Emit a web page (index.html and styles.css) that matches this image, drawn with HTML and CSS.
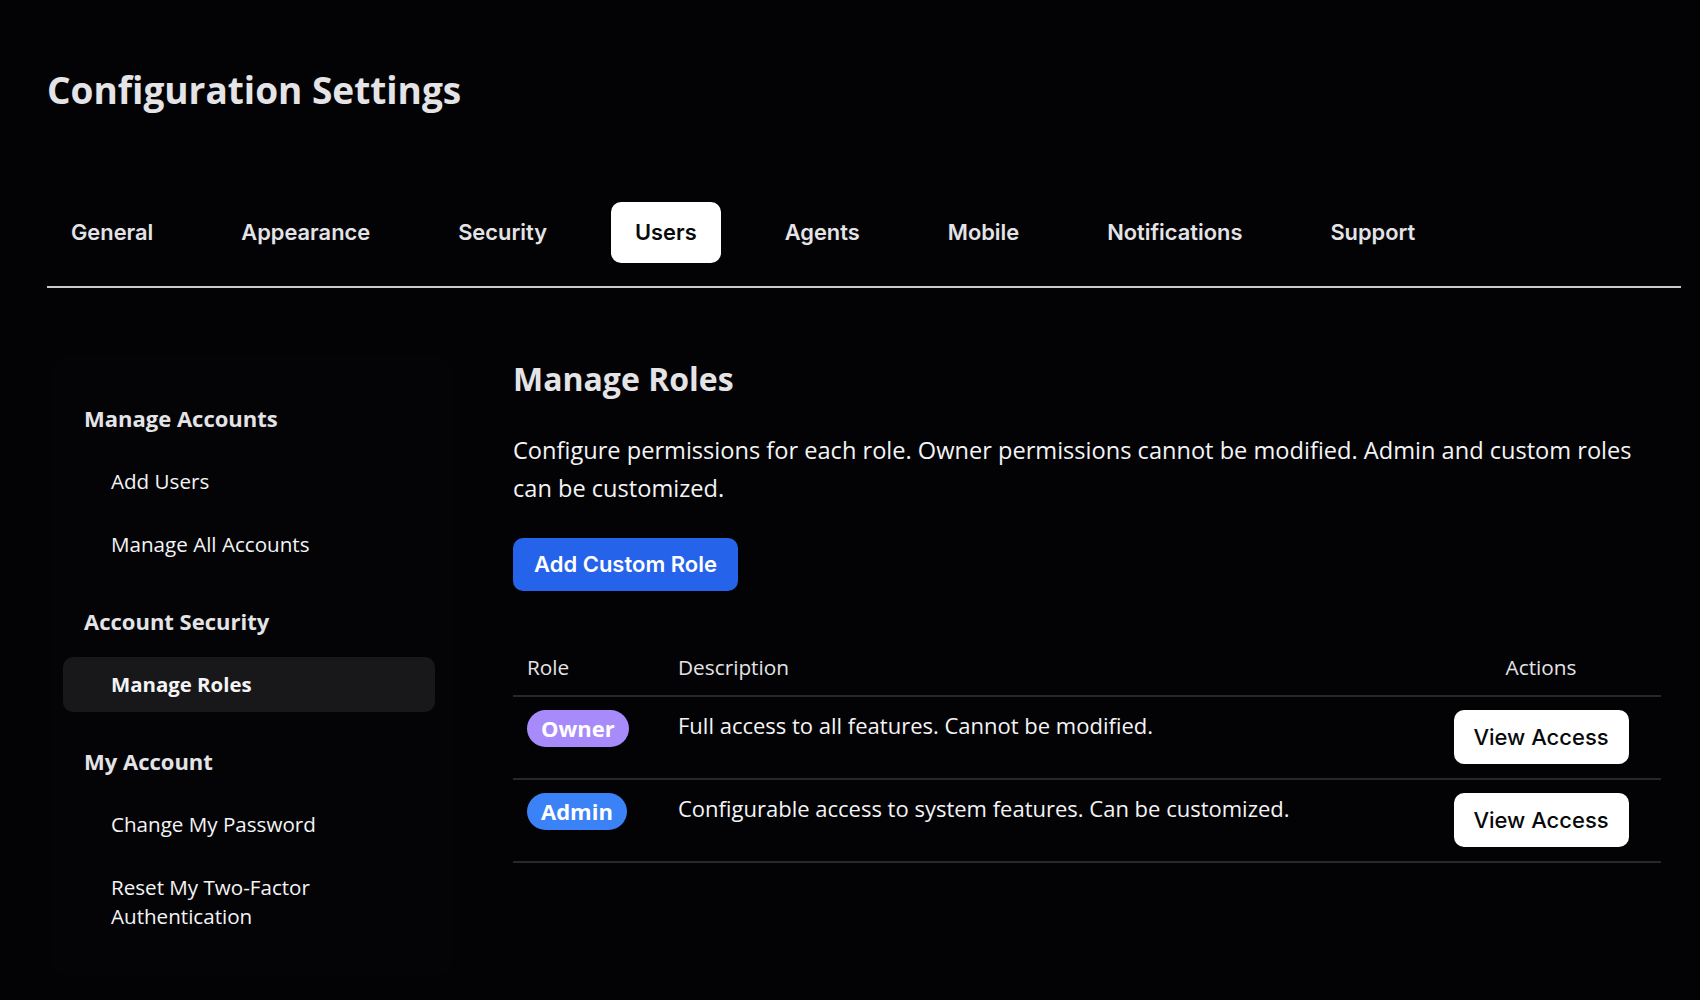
FILE: index.html
```html
<!DOCTYPE html>
<html lang="en">
	<head>
		<meta charset="UTF-8" />
		<meta name="viewport" content="width=device-width, initial-scale=1.0" />
		<title>Configuration Settings</title>
		<link rel="stylesheet" href="styles.css">
	</head>
	<body>
		<div class="page">
			<h1 class="page-title">Configuration Settings</h1>

			<nav class="tabs">
				<div class="tab">General</div>
				<div class="tab">Appearance</div>
				<div class="tab">Security</div>
				<div class="tab active">Users</div>
				<div class="tab">Agents</div>
				<div class="tab">Mobile</div>
				<div class="tab">Notifications</div>
				<div class="tab">Support</div>
			</nav>

			<div class="layout">
				<aside class="sidebar">
					<div class="nav-group">
						<div class="nav-heading">Manage Accounts</div>
						<ul class="nav-list">
							<li class="nav-item">Add Users</li>
							<li class="nav-item">Manage All Accounts</li>
						</ul>
					</div>
					<div class="nav-group">
						<div class="nav-heading">Account Security</div>
						<ul class="nav-list">
							<li class="nav-item active">Manage Roles</li>
						</ul>
					</div>
					<div class="nav-group">
						<div class="nav-heading">My Account</div>
						<ul class="nav-list">
							<li class="nav-item">Change My Password</li>
							<li class="nav-item">Reset My Two-Factor Authentication</li>
						</ul>
					</div>
				</aside>

				<main class="content">
					<h2 class="section-title">Manage Roles</h2>
					<p class="section-text">Configure permissions for each role. Owner permissions cannot be modified. Admin and custom roles can be customized.</p>
					<button class="btn-primary" type="button">Add Custom Role</button>

					<table class="roles">
						<colgroup>
							<col class="col-role" />
							<col />
							<col class="col-actions" />
						</colgroup>
						<thead>
							<tr>
								<th>Role</th>
								<th>Description</th>
								<th class="center">Actions</th>
							</tr>
						</thead>
						<tbody>
							<tr>
								<td><span class="badge badge-owner">Owner</span></td>
								<td>Full access to all features. Cannot be modified.</td>
								<td class="center"><button class="btn-light" type="button">View Access</button></td>
							</tr>
							<tr>
								<td><span class="badge badge-admin">Admin</span></td>
								<td>Configurable access to system features. Can be customized.</td>
								<td class="center"><button class="btn-light" type="button">View Access</button></td>
							</tr>
						</tbody>
					</table>
				</main>
			</div>
		</div>
	</body>
</html>
```

FILE: styles.css
```css
body {
	margin: 0;
	background: #030306;
	color: #f4f4f5;
	font-family: 'Open Sans', sans-serif;
}

.page {
	padding: 68px 19px 0 47px;
}

.page-title {
	margin: 0;
	font-size: 37px;
	font-weight: 700;
	line-height: 43px;
	color: #e4e4e7;
}

/* top tabs */
.tabs {
	display: flex;
	gap: 40px;
	margin-top: 91px;
	padding-bottom: 23px;
	border-bottom: 2px solid #c9c9cc;
}
.tab {
	padding: 18px 24px;
	border-radius: 10px;
	font-family: Inter, 'Liberation Sans', sans-serif;
	font-size: 21.85px;
	font-weight: 600;
	line-height: 25px;
	color: #e4e4e7;
}
.tab.active {
	background: #fff;
	color: #09090b;
}

.layout {
	display: flex;
	gap: 61px;
	margin-top: 69px;
	padding-right: 20px;
}

/* side menu */
.sidebar {
	flex: 0 0 402px;
	box-sizing: border-box;
	margin-left: 3px;
	padding: 47px 17px 32px 13px;
	background: #040407;
	border-radius: 16px;
}
.nav-group + .nav-group {
	margin-top: 35px;
}
.nav-heading {
	padding-left: 21px;
	margin-bottom: 21px;
	font-size: 22px;
	font-weight: 700;
	line-height: 29px;
	color: #e4e4e7;
}
.nav-list {
	list-style: none;
	margin: 0;
	padding: 0;
	display: flex;
	flex-direction: column;
	gap: 8px;
}
.nav-item {
	padding: 13px 48px;
	border-radius: 10px;
	font-size: 20.6px;
	line-height: 29px;
	color: #f4f4f5;
}
.nav-item.active {
	background: #18181b;
	font-size: 20.4px;
	font-weight: 700;
}

/* main panel */
.content {
	flex: 1;
	min-width: 0;
}
.section-title {
	margin: 0;
	font-size: 32px;
	font-weight: 700;
	line-height: 44px;
	color: #e4e4e7;
}
.section-text {
	margin: 30px 0 0;
	font-size: 23.6px;
	line-height: 38px;
	color: #f4f4f5;
}

.btn-primary {
	display: block;
	margin-top: 31px;
	padding: 14px 21px;
	border: none;
	border-radius: 10px;
	background: #2563eb;
	color: #fff;
	font-family: Inter, 'Liberation Sans', sans-serif;
	font-size: 22px;
	font-weight: 600;
	line-height: 25px;
}

.roles {
	width: 100%;
	margin-top: 48px;
	border-collapse: collapse;
	table-layout: fixed;
	font-size: 20.8px;
	line-height: 30px;
}
.col-role {
	width: 151px;
}
.col-actions {
	width: 240px;
}
.roles th {
	padding: 13px 14px;
	text-align: left;
	font-weight: 400;
	color: #e4e4e7;
	border-bottom: 2px solid #27272c;
}
.roles td {
	padding: 13px 14px 14px;
	vertical-align: top;
	font-size: 22px;
	color: #f4f4f5;
	border-bottom: 2px solid #27272c;
}
.roles .center {
	text-align: center;
}

.badge {
	display: inline-block;
	padding: 5px 14px 6px;
	border-radius: 999px;
	font-size: 22px;
	font-weight: 700;
	line-height: 26px;
	color: #fff;
}
.badge-owner {
	background: #a78bfa;
}
.badge-admin {
	background: #3b82f6;
}

.btn-light {
	display: inline-block;
	vertical-align: top;
	width: 175px;
	height: 54px;
	border: none;
	border-radius: 10px;
	background: #fff;
	color: #09090b;
	font-family: Inter, 'Liberation Sans', sans-serif;
	font-size: 22px;
	font-weight: 500;
}
```
